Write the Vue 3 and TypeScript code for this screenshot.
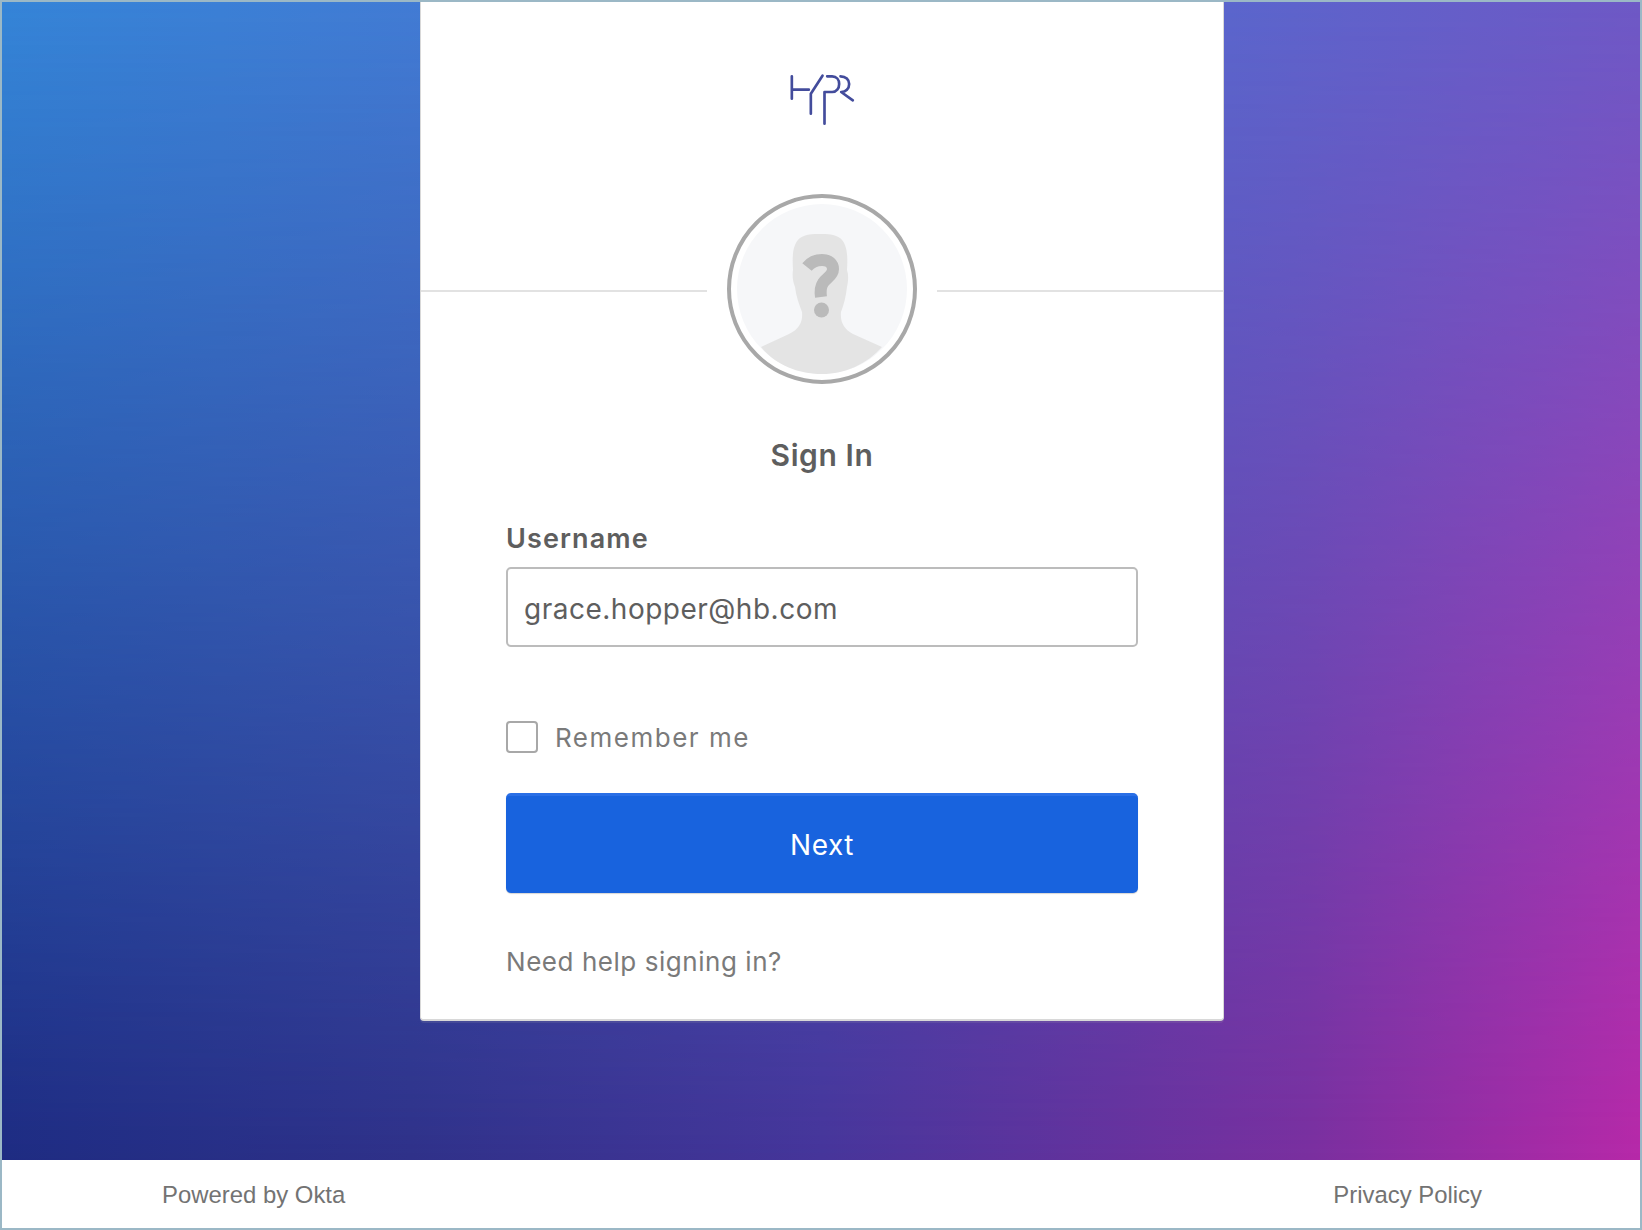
<script setup lang="ts">
import { ref } from 'vue'

const username = ref('grace.hopper@hb.com')
const remember = ref(false)
</script>

<template>
  <div class="page">
    <main class="hero">
      <section class="card">
        <div class="logo-wrap">
          <svg class="logo" viewBox="255 95 215 165" fill="none" stroke="#434c9c" stroke-width="8" stroke-linecap="round" stroke-linejoin="round">
            <path d="M272 108V175M272 148H323" />
            <path d="M329 220V160L364 106" />
            <path d="M370 250V155H393C406 155 414 144 414 131C414 118 406 108 393 108H378" />
            <path d="M418 108C434 108 444 118 444 131C444 145 434 155 420 155L455 180" />
          </svg>
        </div>

        <div class="avatar-row">
          <span class="line"></span>
          <div class="avatar">
            <svg viewBox="0 0 170 170" width="170" height="170">
              <circle cx="85" cy="85" r="85" fill="#f6f7f9" />
              <path
                d="M24 143L52 130C62 125 66 118 65 108C62 100 59 92 58 83C56 78 55 72 56 66C55 50 56 40 63 34C69 30 75 30 83 30C91 30 97 30 103 34C110 40 111 50 110 66C112 72 111 78 110 83C109 92 107 100 104 108C103 118 107 125 116 130L145 143C130 160 108 170 85 170C60 170 38 160 24 143Z"
                fill="#e4e4e4"
              />
              <path
                d="M70 63C74 58 79 56 85 56C92 56 96 60 96 65C96 72 89 74 86 79C84 82 83 86 84 93"
                fill="none"
                stroke="#bababa"
                stroke-width="12"
              />
              <circle cx="84.5" cy="106" r="7.5" fill="#bababa" />
            </svg>
          </div>
          <span class="line"></span>
        </div>

        <h1 class="title">Sign In</h1>

        <form class="form" @submit.prevent>
          <label class="field-label" for="username">Username</label>
          <input id="username" v-model="username" class="field-input" type="text" />

          <label class="remember">
            <input v-model="remember" class="remember-box" type="checkbox" />
            <span>Remember me</span>
          </label>

          <button class="next-btn" type="submit">Next</button>

          <a class="help-link" href="#">Need help signing in?</a>
        </form>
      </section>
    </main>

    <footer class="footer">
      <a href="#">Powered by Okta</a>
      <a href="#">Privacy Policy</a>
    </footer>
  </div>
</template>

<style>
html,
body {
  margin: 0;
  background: #fff;
}
</style>

<style scoped>
.page {
  box-sizing: border-box;
  width: 1642px;
  height: 1230px;
  border: 2px solid #9bb8c6;
  display: flex;
  flex-direction: column;
  background: #fff;
}

.hero {
  position: relative;
  height: 1158px;
  flex: none;
  display: flex;
  justify-content: center;
  align-items: flex-start;
  background: linear-gradient(90deg, #3585d8 0%, #4a76d2 40%, #5b66cd 75%, #6e59c6 100%);
}

.hero::before {
  content: '';
  position: absolute;
  inset: 0;
  background: linear-gradient(90deg, #1e2b82 0%, #2f3189 25%, #46359a 50%, #7a2f9f 80%, #b728a8 100%);
  -webkit-mask-image: linear-gradient(180deg, transparent 0%, #000 100%);
  mask-image: linear-gradient(180deg, transparent 0%, #000 100%);
}

.card {
  position: relative;
  box-sizing: border-box;
  width: 804px;
  height: 1019px;
  margin-left: 2px;
  background: #fff;
  border: 1px solid #d8d8d8;
  border-bottom-width: 2px;
  border-top: none;
  border-radius: 0 0 4px 4px;
  box-shadow: 0 2px 0 rgba(175, 175, 175, 0.15);
  font-family: Inter, 'Liberation Sans', sans-serif;
  color: #5e5e5e;
}

.logo-wrap {
  display: flex;
  justify-content: center;
  padding-top: 70px;
}

.logo {
  width: 72px;
  height: 55px;
}

.avatar-row {
  display: flex;
  align-items: center;
  margin-top: 67px;
}

.line {
  flex: 1;
  height: 2px;
  background: #e2e2e2;
  margin-top: 3px;
}

.avatar {
  box-sizing: border-box;
  width: 190px;
  height: 190px;
  margin: 0 20px;
  padding: 6px;
  border: 4px solid #a8a8a8;
  border-radius: 50%;
  background: #fff;
  overflow: hidden;
}

.avatar svg {
  display: block;
}

.title {
  margin: 52px 0 0;
  text-align: center;
  font-size: 30px;
  line-height: 38px;
  font-weight: 600;
  letter-spacing: 0.6px;
  color: #5e5e5e;
}

.form {
  display: flex;
  flex-direction: column;
  padding: 0 85px;
  margin-top: 47px;
}

.field-label {
  font-size: 27px;
  line-height: 36px;
  font-weight: 600;
  letter-spacing: 1.1px;
  color: #5e5e5e;
}

.field-input {
  box-sizing: border-box;
  width: 100%;
  height: 80px;
  margin-top: 10px;
  padding: 4px 16px 0 16px;
  border: 2px solid #bcbcbc;
  border-radius: 5px;
  outline: none;
  font-family: inherit;
  font-size: 28px;
  letter-spacing: 0.5px;
  color: #5e5e5e;
  background: #fff;
}

.remember {
  display: flex;
  align-items: center;
  gap: 17px;
  margin-top: 74px;
  height: 32px;
  font-size: 26px;
  letter-spacing: 1.5px;
  color: #7a7a7a;
}

.remember-box {
  appearance: none;
  box-sizing: border-box;
  width: 32px;
  height: 32px;
  margin: 0;
  border: 2px solid #a8a8a8;
  border-radius: 4px;
  background: #fff;
}

.next-btn {
  height: 100px;
  margin-top: 40px;
  border: none;
  border-top: 3px solid #2a6fe6;
  border-radius: 5px;
  background: #1863de;
  box-shadow: 0 1px 1px #d5d5d5;
  font-family: inherit;
  font-size: 28px;
  letter-spacing: 0.5px;
  color: #fff;
}

.help-link {
  margin-top: 52px;
  font-size: 26px;
  line-height: 34px;
  letter-spacing: 0.55px;
  color: #7a7a7a;
  text-decoration: none;
}

.footer {
  flex: 1;
  display: flex;
  justify-content: space-between;
  align-items: center;
  padding: 2px 158px 0 160px;
  font-family: 'Liberation Sans', Arial, sans-serif;
  font-size: 23.9px;
}

.footer a {
  color: #737373;
  text-decoration: none;
}
</style>
